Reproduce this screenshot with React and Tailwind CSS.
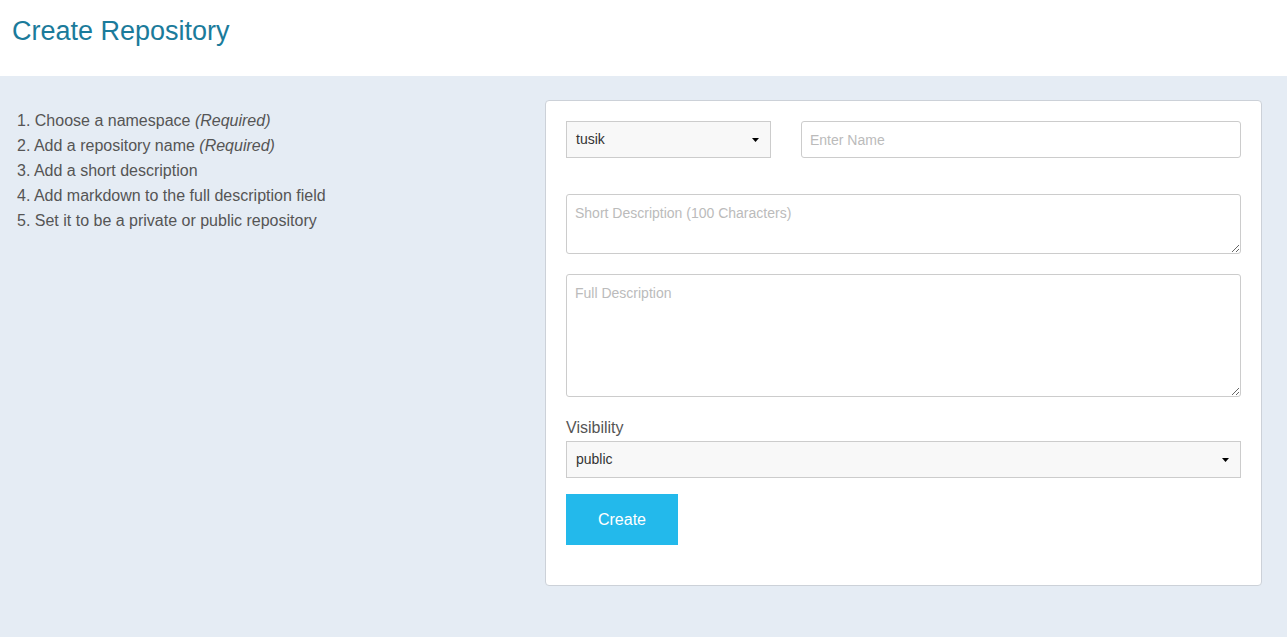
import React from "react";

function Caret() {
  return (
    <svg width="7" height="4" viewBox="0 0 7 4" className="absolute right-[11px] top-1/2 -translate-y-1/2 pointer-events-none">
      <path d="M0 0 H7 L3.5 4 Z" fill="#000" />
    </svg>
  );
}

export default function App() {
  const font = { fontFamily: '"Liberation Sans", Arial, sans-serif' };
  return (
    <div style={font} className="min-h-[637px] bg-[#e5ecf4] text-[#555]">
      <header className="h-[76px] bg-white pl-[12px] pt-[14px]">
        <h1 className="text-[27px] leading-[34px] text-[#1b7b9b]">Create Repository</h1>
      </header>
      <main className="flex pt-[24px]">
        <div className="w-[545px] shrink-0 pl-[17px] pt-[8px]">
          <ol className="text-[16px] leading-[25px] text-[#555]">
            <li>1. Choose a namespace <i>(Required)</i></li>
            <li>2. Add a repository name <i>(Required)</i></li>
            <li>3. Add a short description</li>
            <li>4. Add markdown to the full description field</li>
            <li>5. Set it to be a private or public repository</li>
          </ol>
        </div>
        <div className="w-[717px] h-[486px] bg-white border border-[#ccd1d8] rounded-[4px] p-[20px]">
          <div className="flex gap-[30px]">
            <div className="relative w-[205px] h-[37px] bg-[#f8f8f8] border border-[#ccc] flex items-center pl-[9px] text-[14px] text-[#333]">
              tusik
              <Caret />
            </div>
            <input
              placeholder="Enter Name"
              className="w-[440px] h-[37px] border border-[#ccc] rounded-[3px] px-[8px] text-[14px] text-[#333] placeholder:text-[#bbb] outline-none"
            />
          </div>
          <textarea
            placeholder="Short Description (100 Characters)"
            className="block mt-[36px] w-[675px] h-[60px] border border-[#ccc] rounded-[3px] px-[8px] pt-[8px] text-[14px] leading-[20px] text-[#333] placeholder:text-[#bbb] outline-none"
          />
          <textarea
            placeholder="Full Description"
            className="block mt-[20px] w-[675px] h-[123px] border border-[#ccc] rounded-[3px] px-[8px] pt-[8px] text-[14px] leading-[20px] text-[#333] placeholder:text-[#bbb] outline-none"
          />
          <label className="block mt-[18px] text-[16px] leading-[26px] text-[#555]">Visibility</label>
          <div className="relative w-[675px] h-[37px] bg-[#f8f8f8] border border-[#ccc] flex items-center pl-[9px] text-[14px] text-[#333]">
            public
            <Caret />
          </div>
          <button className="mt-[16px] w-[112px] h-[51px] bg-[#23b9eb] text-white text-[16px]">Create</button>
        </div>
      </main>
    </div>
  );
}
